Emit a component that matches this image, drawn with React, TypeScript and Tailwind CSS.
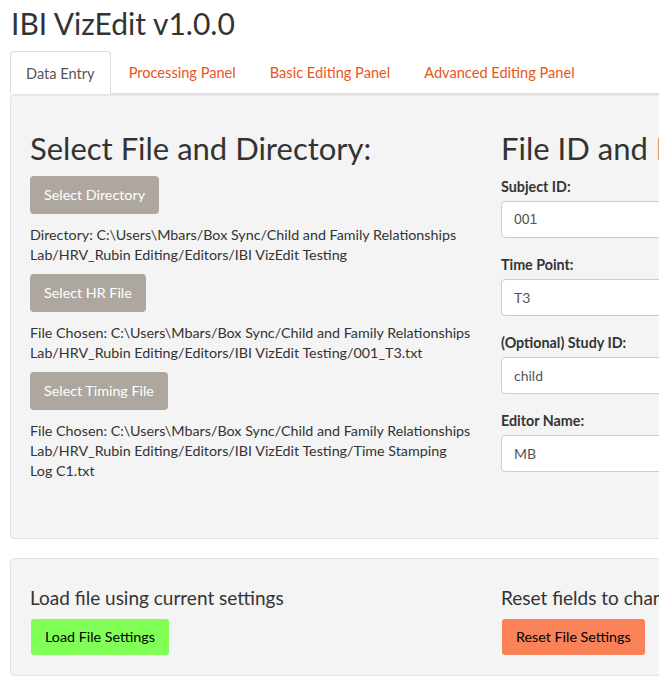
import React from "react";

const fileBtn =
  "h-[38px] px-[14px] rounded-[4px] bg-[#aea79f] text-white text-[14.3px] leading-[20px] inline-flex items-center";

function Field({ label, value, mono }: { label: string; value: string; mono?: boolean }) {
  return (
    <div className="mb-[17px]">
      <div className="text-[14.3px] leading-[20px] font-bold text-[#333] mb-[4px]">{label}</div>
      <div className="h-[37px] w-full border border-[#cccccc] rounded-[4px] bg-white flex items-center px-[12px]">
        <span
          className={
            "text-[14px] text-[#555] " + (mono ? "font-['Liberation_Sans',sans-serif]" : "")
          }
        >
          {value}
        </span>
      </div>
    </div>
  );
}

export default function App() {
  return (
    <div className="w-full h-[697px] overflow-hidden bg-white text-[#333] font-['Lato',sans-serif]">
      <div className="w-[1000px] pl-[10px]">
        <h1 className="text-[30px] leading-[36px] pt-[5px] pb-[10px] pl-[1px] text-[#333]">IBI VizEdit v1.0.0</h1>
        <ul className="flex border-b border-[#dddddd] h-[43px]">
          <li className="mr-[2px] px-[15px] pt-[2px] h-[43px] flex items-center border border-[#dddddd] border-b-white rounded-t-[4px] bg-white text-[#555] text-[14.6px] -mb-px">
            Data Entry
          </li>
          {["Processing Panel", "Basic Editing Panel", "Advanced Editing Panel"].map((t) => (
            <li key={t} className="mr-[2px] px-[16px] pt-[2px] h-[42px] flex items-center text-[#e95420] text-[14.6px]">
              {t}
            </li>
          ))}
        </ul>
        <div className="bg-[#f4f4f4] border border-[#e3e3e3] rounded-[4px] pl-[19px] pt-[35px] h-[445px] shadow-[inset_0_1px_1px_rgba(0,0,0,0.05)]">
          <div className="grid grid-cols-[441px_441px] gap-x-[30px]">
            <div>
              <h2 className="text-[31px] leading-[36px] mb-[10px] whitespace-nowrap">Select File and Directory:</h2>
              <button className={fileBtn}>Select Directory</button>
              <p className="text-[14.3px] leading-[20px] mt-[11px] mb-[9px]">
                Directory: C:\Users\Mbars/Box Sync/Child and Family Relationships Lab/HRV_Rubin Editing/Editors/IBI VizEdit Testing
              </p>
              <button className={fileBtn}>Select HR File</button>
              <p className="text-[14.3px] leading-[20px] mt-[11px] mb-[9px]">
                File Chosen: C:\Users\Mbars/Box Sync/Child and Family Relationships Lab/HRV_Rubin Editing/Editors/IBI VizEdit Testing/001_T3.txt
              </p>
              <button className={fileBtn}>Select Timing File</button>
              <p className="text-[14.3px] leading-[20px] mt-[11px]">
                File Chosen: C:\Users\Mbars/Box Sync/Child and Family Relationships Lab/HRV_Rubin Editing/Editors/IBI VizEdit Testing/Time Stamping Log C1.txt
              </p>
            </div>
            <div>
              <h2 className="text-[31px] leading-[36px] mb-[11px] whitespace-nowrap">File ID and Information:</h2>
              <Field label="Subject ID:" value="001" mono />
              <Field label="Time Point:" value="T3" />
              <Field label="(Optional) Study ID:" value="child" />
              <Field label="Editor Name:" value="MB" />
            </div>
          </div>
        </div>
        <div className="mt-[19px] bg-[#f4f4f4] border border-[#e3e3e3] rounded-[4px] pl-[19px] pt-[27px] h-[118px]">
          <div className="grid grid-cols-[441px_441px] gap-x-[30px]">
            <div>
              <div className="text-[19px] leading-[24px] mb-[9px]">Load file using current settings</div>
              <button className="h-[36px] ml-px px-[14px] rounded-[3px] bg-[#80ff57] text-black text-[14.3px]">
                Load File Settings
              </button>
            </div>
            <div>
              <div className="text-[19px] leading-[24px] mb-[9px] whitespace-nowrap">Reset fields to change settings</div>
              <button className="h-[36px] ml-px px-[14px] rounded-[3px] bg-[#fa8259] text-black text-[14.3px]">
                Reset File Settings
              </button>
            </div>
          </div>
        </div>
      </div>
    </div>
  );
}
